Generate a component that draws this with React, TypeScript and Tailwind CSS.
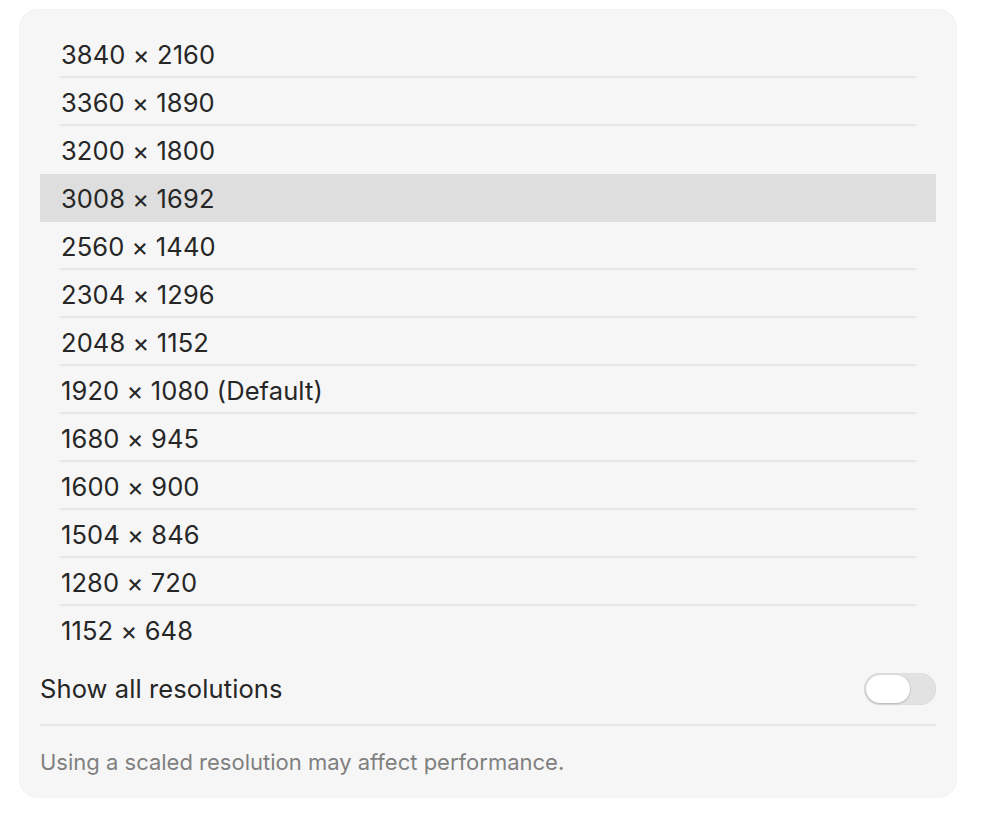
import React from "react";

const rows = [
  "3840 × 2160",
  "3360 × 1890",
  "3200 × 1800",
  "3008 × 1692",
  "2560 × 1440",
  "2304 × 1296",
  "2048 × 1152",
  "1920 × 1080 (Default)",
  "1680 × 945",
  "1600 × 900",
  "1504 × 846",
  "1280 × 720",
  "1152 × 648",
];

export default function App() {
  return (
    <div
      className="w-[984px] h-[836px] bg-white pt-[10px] pl-[20px]"
      style={{ fontFamily: "Inter, 'Noto Sans', sans-serif" }}
    >
      <div className="w-[936px] h-[787px] rounded-[18px] bg-[#f6f6f6] shadow-[0_0_0_1px_#f2f2f2] px-[20px] pt-[20px] flex flex-col">
        <div className="flex flex-col">
          {rows.map((r, i) => {
            const selected = i === 3;
            const last = i === rows.length - 1;
            const nextSelected = i === 2;
            return (
              <div
                key={r}
                className={`h-[48px] flex flex-col ${selected ? "bg-[#dedede]" : ""}`}
              >
                <div className="flex-1 flex items-center pt-[5px] pl-[21px] text-[25.5px] text-[#262626] tracking-[0.1px]">
                  {r}
                </div>
                <div
                  className={`mx-[20px] h-[2px] ${
                    last || selected || nextSelected ? "bg-transparent" : "bg-[#e8e8e8]"
                  }`}
                />
              </div>
            );
          })}
        </div>
        <div className="h-[70px] flex items-center justify-between">
          <span className="text-[25.5px] text-[#262626] tracking-[0.1px]">Show all resolutions</span>
          <div className="w-[72px] h-[32px] rounded-full bg-[#e2e2e2] p-[2px] flex items-center shadow-[inset_0_0_1px_rgba(0,0,0,0.15)]">
            <div className="w-[44px] h-[28px] rounded-full bg-white shadow-[0_0.5px_2px_rgba(0,0,0,0.3)]" />
          </div>
        </div>
        <div className="h-[2px] bg-[#e8e8e8]" />
        <div className="pt-[20px] text-[22px] text-[#808080]">
          Using a scaled resolution may affect performance.
        </div>
      </div>
    </div>
  );
}
